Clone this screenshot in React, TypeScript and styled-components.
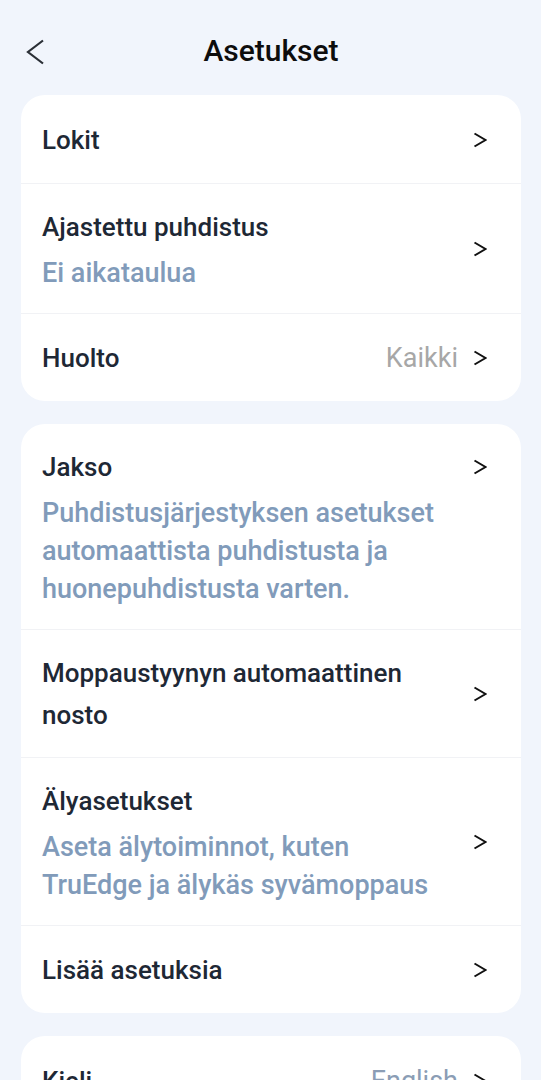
import React from "react";
import styled, { createGlobalStyle } from "styled-components";

const Global = createGlobalStyle`
  html, body { margin: 0; padding: 0; background: #f1f5fc; }
  body { font-family: Roboto, "Noto Sans", "Liberation Sans", sans-serif; -webkit-font-smoothing: antialiased; }
  * { box-sizing: border-box; }
`;

const Page = styled.div`
  width: 541px;
  min-height: 1080px;
  background: #f1f5fc;
  padding: 0 20px 40px 21px;
  display: flex;
  flex-direction: column;
`;

const Header = styled.header`
  height: 95px;
  display: flex;
  align-items: center;
  justify-content: center;
  position: relative;
  padding-top: 5px;
`;

const BackButton = styled.button`
  position: absolute;
  left: 2px;
  top: 38px;
  width: 24px;
  height: 28px;
  padding: 0;
  border: none;
  background: none;
  display: flex;
  align-items: center;
  justify-content: center;
`;

const Title = styled.h1`
  margin: 0;
  font-size: 30px;
  font-weight: 500;
  color: #0d0d0d;
`;

const Cards = styled.div`
  display: flex;
  flex-direction: column;
  gap: 23px;
`;

const Card = styled.section`
  background: #ffffff;
  border-radius: 24px;
  overflow: hidden;
`;

const Row = styled.div<{ $top?: boolean }>`
  display: flex;
  align-items: ${(p) => (p.$top ? "flex-start" : "center")};
  min-height: 88px;
  padding: 22px 34px 21px 21px;
  & + & {
    border-top: 1px solid #f1f2f5;
  }
`;

const Texts = styled.div`
  flex: 1;
  display: flex;
  flex-direction: column;
  gap: 6px;
  min-width: 0;
`;

const Label = styled.div`
  font-size: 26px;
  line-height: 42px;
  font-weight: 500;
  color: #1e2835;
  padding-right: 12px;
`;

const Sub = styled.div`
  font-size: 27px;
  line-height: 38px;
  font-weight: 500;
  color: #819bba;
  padding-right: 24px;
`;

const Value = styled.span<{ $tone?: "gray" | "blue" }>`
  font-size: 27px;
  line-height: 42px;
  color: ${(p) => (p.$tone === "blue" ? "#8b9db5" : "#a7a7a7")};
  margin-right: 15px;
`;

const ChevronBox = styled.span<{ $top?: boolean }>`
  width: 14px;
  height: ${(p) => (p.$top ? "42px" : "16px")};
  display: flex;
  align-items: center;
  flex-shrink: 0;
`;

const Chevron = ({ top }: { top?: boolean }) => (
  <ChevronBox $top={top}>
    <svg width="14" height="16" viewBox="0 0 14 16">
      <polyline points="1.5,1.5 12.5,8 1.5,14.5" fill="none" stroke="#111" strokeWidth="2" strokeLinejoin="miter" />
    </svg>
  </ChevronBox>
);

type Item = {
  label: string;
  sub?: string;
  value?: string;
  tone?: "gray" | "blue";
  top?: boolean;
};

const groups: Item[][] = [
  [
    { label: "Lokit" },
    { label: "Ajastettu puhdistus", sub: "Ei aikataulua" },
    { label: "Huolto", value: "Kaikki" },
  ],
  [
    {
      label: "Jakso",
      sub: "Puhdistusjärjestyksen asetukset automaattista puhdistusta ja huonepuhdistusta varten.",
      top: true,
    },
    { label: "Moppaustyynyn automaattinen nosto" },
    { label: "Älyasetukset", sub: "Aseta älytoiminnot, kuten TruEdge ja älykäs syvämoppaus" },
    { label: "Lisää asetuksia" },
  ],
  [{ label: "Kieli", value: "English", tone: "blue" }],
];

export default function App() {
  return (
    <>
      <Global />
      <Page>
        <Header>
          <BackButton aria-label="Takaisin">
            <svg width="20" height="26" viewBox="0 0 20 26">
              <polyline points="18,1.5 3,13 18,24.5" fill="none" stroke="#2a2f36" strokeWidth="2.2" />
            </svg>
          </BackButton>
          <Title>Asetukset</Title>
        </Header>
        <Cards>
          {groups.map((g, i) => (
            <Card key={i}>
              {g.map((it) => (
                <Row key={it.label} $top={it.top}>
                  <Texts>
                    <Label>{it.label}</Label>
                    {it.sub && <Sub>{it.sub}</Sub>}
                  </Texts>
                  {it.value && <Value $tone={it.tone}>{it.value}</Value>}
                  <Chevron top={it.top} />
                </Row>
              ))}
            </Card>
          ))}
        </Cards>
      </Page>
    </>
  );
}
